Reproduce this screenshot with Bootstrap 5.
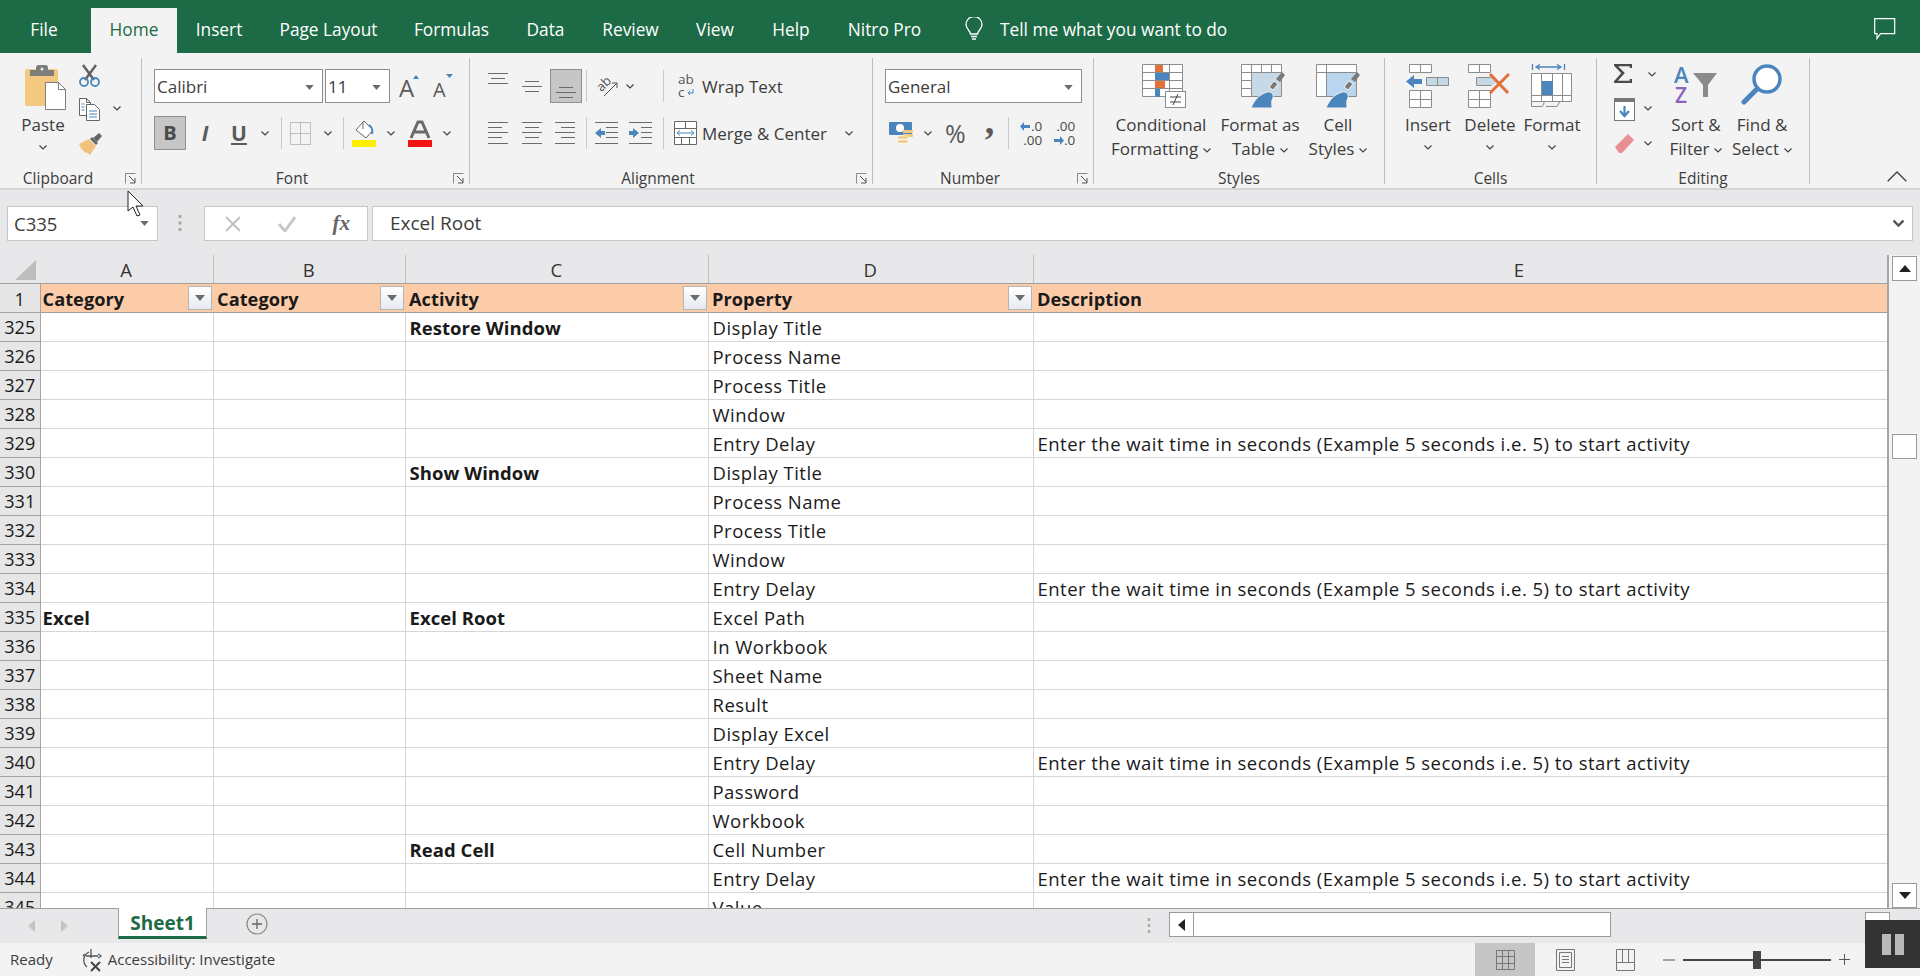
<!DOCTYPE html>
<html lang="en">
<head>
<meta charset="utf-8">
<title>Excel</title>
<link href="https://cdn.jsdelivr.net/npm/bootstrap@5.3.0/dist/css/bootstrap.min.css" rel="stylesheet">
<style>
html,body{height:976px;overflow:hidden}
body{font-family:"Open Sans","Liberation Sans",sans-serif;font-size:17px;color:#3c3c3c;background:#f3f3f3;letter-spacing:0}
svg{display:block;flex:none}
.topbar{height:53px;background:#1d6b46;color:#fff;padding-left:12px}
.topbar .nav-link{color:#fff;height:45px;margin-top:8px;padding:0;line-height:44px;text-align:center;font-size:17.300px;border-radius:0;white-space:nowrap}
.topbar .nav-link.active{background:#f3f3f3;color:#1d6b46}
.t1{width:64px}.t2{width:86px}.t3{width:84px}.t4{width:135px}.t5{width:111px}.t6{width:77px}.t7{width:93px}.t8{width:76px}.t9{width:76px}.t10{width:111px}
.t1{margin-right:15px}
.tell{margin-left:24px;font-size:17.300px;padding-top:6px}
.tell svg{margin-top:-2px}
.ribbon{height:137px;padding-top:5px;background:#f3f3f3;border-bottom:2px solid #d5d5d5}
.rg{height:126px;border-right:1px solid #bcbcbc;flex:none}
.rg-body{height:100px}
.rg-foot{height:26px;line-height:40px;text-align:center;position:relative;font-size:15.500px}
.launch{position:absolute;right:5px;top:15px}
.g1{width:142px}.g2{width:328px}.g3{width:403px}.g4{width:221px}.g5{width:291px}.g6{width:212px}.g7{width:213px}
.pt6{padding-top:6px}.pt11{padding-top:11px}
.pr25{padding-right:25px}.pr26{padding-right:26px}.pr27{padding-right:27px}
.rows{gap:13px}.rowx{height:34px}
.ml1{margin-left:1px}.ml2{margin-left:2px}.ml4{margin-left:4px}.ml5{margin-left:5px}.ml6{margin-left:6px}.ml8{margin-left:8px}.ml9{margin-left:9px}.ml10{margin-left:10px}.ml11{margin-left:11px}.ml12{margin-left:12px}.ml13{margin-left:13px}.ml14{margin-left:14px}.ml16{margin-left:16px}.ml17{margin-left:17px}.ml18{margin-left:18px}.ml19{margin-left:19px}.ml20{margin-left:20px}.ml29{margin-left:29px}
.combo{height:34px;background:#fff;border:1px solid #8f8f8f;padding:2px 8px 0 2px;font-size:17px}
.w169{width:169px}.w65{width:65px}.w197{width:197px}
.toggled{background:#c6c6c6;border:1px solid #8f8f8f;height:34px;width:32px;display:flex;align-items:center;justify-content:center;flex:none}
.b-btn{font-weight:700;font-size:20px;color:#4a4a4a}
.vsep{width:1px;height:32px;background:#c9c9c9;flex:none}
.glyph{font-size:21px;line-height:24px;color:#5a5a5a;width:14px;text-align:center;flex:none}
.big{display:flex;flex-direction:column;align-items:center;flex:none}
.big>*{flex:none}
.big .ic{height:49px}
.lbl{line-height:24px;text-align:center;white-space:nowrap}
.lbl svg{display:inline-block;vertical-align:middle;margin-left:5px}
.chevline{height:20px;display:flex;align-items:center;justify-content:center}
.w54{width:54px}.w98{width:98px}.w100{width:100px}.w56{width:56px}.w62{width:62px}.w66{width:66px}.w60{width:60px}.w49{width:49px}
.small-stack{display:flex;flex-direction:column;flex:none}
.s1{height:35px}.s2{height:36px}.s3{height:26px}
.pl16{padding-left:16px}.pl18{padding-left:18px}.pl12{padding-left:12px}.pl17{padding-left:17px}
.ribbon-end{flex:1 1 auto;padding:0 13px 6px 0}
.band{height:65px;background:#e8e8ea;padding:16px 7px 0}
.fbox{height:35px;background:#fff;border:1px solid #c6c6c6;font-size:19px;padding-top:1px}
.name{width:151px;padding:0 8px 0 6px;font-size:18.500px}
.fxb{width:164px;margin-left:46px;padding:0 17px 0 20px}
.fin{margin-left:4px;width:1541px;padding:0 8px 0 17px}
.sheetwrap{height:653px;background:#fff}
.gridclip{width:1889px;height:653px;overflow:hidden;border-right:2px solid #a5a5a5;flex:none}
.sheet.table{table-layout:fixed;width:1887px;margin:0;border-collapse:collapse;font-size:18.500px;letter-spacing:.47px;color:#222}
.sheet.table>:not(caption)>*>*{padding:1px 3px 0 4px;height:29px;line-height:27px;border:1px solid #d6d6d6;background:#fff;color:#1a1a1a;white-space:nowrap;box-shadow:none;overflow:visible}
.sheet.table .fw-bold,.sheet.table .hdr th{letter-spacing:.05px}
.sheet.table>tbody>tr>td:nth-child(2),.sheet.table>thead>tr.hdr>th:nth-child(2){padding-left:2px}
.c0{width:40px}.c1{width:173px}.c2{width:192px}.c3{width:303px}.c4{width:325px}.c5{width:854px}
.sheet.table>thead>tr.cols>*{height:28px;background:#e8e8ea;text-align:center;font-weight:400;border:0;border-right:1px solid #c0c0c0;border-bottom:1px solid #9f9f9f;line-height:27px;padding:1px 0 0;color:#333}
.sheet.table>thead>tr.cols>th.ecol{padding-left:118px}
.sheet.table>thead>tr.hdr>*{background:#fccca8;font-weight:700;position:relative;border:0;border-bottom:1px solid #9f9f9f;line-height:26px;font-size:18.200px}
.sheet.table>thead>tr>th.rh,.sheet.table>tbody>tr>th.rh{background:#e6e6e6;font-weight:400;text-align:center;padding:1px 0 0;border:0;border-right:1px solid #a5a5a5;border-bottom:1px solid #a5a5a5;letter-spacing:0;font-size:18px}
.sheet.table>thead>tr.cols>th.corner{background:#e8e8ea;padding:5px 0 0 15px;border-right:0;vertical-align:top}
.fbtn{position:absolute;right:1px;top:2px;width:24px;height:24px;background:linear-gradient(#fff,#e6eaf0);border:1px solid #b5b5b5;display:flex;align-items:center;justify-content:center}
.vscroll{width:31px;background:#f3f3f3;padding:1px 3px 0 3px}
.sbtn{width:25px;height:25px;background:#fff;border:1px solid #9a9a9a;display:flex;align-items:center;justify-content:center;flex:none}
.thumb{margin-top:153px}
.tabbar{height:35px;background:#e8e8ea;border-top:1px solid #9f9f9f;position:relative}
.navs{width:118px;padding-left:28px;gap:26px}
.sheet-tab{width:89px;height:31px;margin-top:-1px;background:#fff;border-left:1px solid #9f9f9f;border-right:1px solid #9f9f9f;border-bottom:3px solid #1d6b46;text-align:center;font-weight:700;color:#1d6b46;font-size:19px;line-height:30px}
.addc{margin-left:39px}
.hscroll{margin-left:901px;margin-top:3px}
.hdots{left:1147px}
.fdots{left:178px;top:214px}
.htrack{width:417px;height:25px;background:#fff;border:1px solid #9a9a9a;border-left:0}
.sbtn.r{margin-left:254px}
.status{height:33px;background:#f3f3f3;padding-left:10px;font-size:15px;position:relative}
.acc{margin-left:27px}
.views{margin-left:auto;height:33px}
.view{width:60px;height:33px;display:flex;align-items:center;justify-content:center}
.view.on{background:#c6c6c6}
.zoomc{width:187px;margin-right:70px;margin-left:8px}
.slider{width:148px;height:2px;background:#444;margin:0 8px;position:relative}
.sthumb{position:absolute;left:70px;top:-8px;width:8px;height:18px;background:#444}
.pause{position:absolute;right:0;top:920px;width:55px;height:48px;background:#333;display:flex;align-items:center;justify-content:center;gap:4px}
.pause i{display:block;width:9px;height:21px;background:#b9b9b9}
.cursor{position:absolute;left:127px;top:190px}
.ic-txt{font-size:25px;color:#5a5a5a;line-height:24px}
.comma{font-family:"Liberation Serif",serif;font-weight:700;font-size:38px;color:#5a5a5a;line-height:24px;margin-top:-24px}
.fx{font-family:"Liberation Serif",serif;font-style:italic;font-weight:600;font-size:21px;color:#666}
.dec{font-size:13.500px;line-height:14px;color:#4a4a4a;width:23px}
.dec span{display:flex;justify-content:flex-end;align-items:center}
.textbtn{white-space:nowrap;font-size:17px;padding-top:2px}
</style>
</head>
<body class="position-relative">
<svg width="0" height="0" class="position-absolute">
<symbol id="ch" viewBox="0 0 8 5"><path d="M.5.5 4 4 7.500.5" fill="none" stroke="#444" stroke-width="1.200"/></symbol>
<symbol id="tri" viewBox="0 0 10 6"><path d="M0 0h10L5 6z" fill="#6b6b6b"/></symbol>
<symbol id="lau" viewBox="0 0 11 11"><path d="M.5 10.500V.5H10.500" fill="none" stroke="#8a8a8a"/><path d="M4 3l6 6M5 10h5V5" fill="none" stroke="#555"/></symbol>
</svg>

<div class="topbar d-flex">
  <ul class="nav flex-nowrap">
    <li class="nav-item"><a class="nav-link t1">File</a></li>
    <li class="nav-item"><a class="nav-link active t2">Home</a></li>
    <li class="nav-item"><a class="nav-link t3">Insert</a></li>
    <li class="nav-item"><a class="nav-link t4">Page Layout</a></li>
    <li class="nav-item"><a class="nav-link t5">Formulas</a></li>
    <li class="nav-item"><a class="nav-link t6">Data</a></li>
    <li class="nav-item"><a class="nav-link t7">Review</a></li>
    <li class="nav-item"><a class="nav-link t8">View</a></li>
    <li class="nav-item"><a class="nav-link t9">Help</a></li>
    <li class="nav-item"><a class="nav-link t10">Nitro Pro</a></li>
  </ul>
  <div class="tell d-flex align-items-center gap-3">
    <svg width="20" height="24" viewBox="0 0 20 24"><path d="M6.500 17c0-3-4.500-5-4.500-9.500a8 8 0 0 1 16 0C18 12 13.500 14 13.500 17zM7 19.500h6M8 22h4" fill="none" stroke="#fff" stroke-width="1.300"/></svg>
    <span>Tell me what you want to do</span>
  </div>
  <div class="ms-auto d-flex align-items-center pe-4 pt-1">
    <svg width="22" height="22" viewBox="0 0 22 22"><path d="M.7.7h20v15H6.500L3 20.500v-4.800H.7z" fill="none" stroke="#fff" stroke-width="1.200"/></svg>
  </div>
</div>

<div class="ribbon d-flex">
  <!-- Clipboard -->
  <div class="rg g1">
    <div class="rg-body d-flex pt6 pl16">
      <div class="big w54">
        <div class="ic ml6">
          <svg width="42" height="46" viewBox="0 0 42 46"><rect x="0" y="5" width="33" height="37" rx="2" fill="#f3c97f"/><path d="M11 6V3.500A2.500 2.500 0 0 1 13.500 1h7A2.500 2.500 0 0 1 23 3.500V6h6v6H5V6z" fill="#7d7d7d"/><circle cx="17" cy="5" r="1.500" fill="#eee"/><path d="M20.500 18.500h13l7 7v20h-20z" fill="#fff" stroke="#7d7d7d"/><path d="M33.500 18.500v7h7" fill="none" stroke="#7d7d7d"/></svg>
        </div>
        <div class="lbl">Paste</div>
        <div class="chevline"><svg width="8" height="5"><use href="#ch"/></svg></div>
      </div>
      <div class="small-stack w60 ml9">
        <div class="s1"><svg width="21" height="23" viewBox="0 0 21 23"><path d="M4 1l11 15M17 1L6 16" stroke="#5f5f5f" stroke-width="2.400" fill="none"/><circle cx="5" cy="18" r="4" fill="none" stroke="#4a86bd" stroke-width="1.800"/><circle cx="16" cy="18" r="4" fill="none" stroke="#4a86bd" stroke-width="1.800"/></svg></div>
        <div class="s2 d-flex"><svg width="21" height="23" viewBox="0 0 21 23"><path d="M.5.500h7l4 4v13H.5zM7.500.5v4h4" fill="#fff" stroke="#666"/><path d="M7.500 6.500h8l5 5v11h-13z" fill="#fff" stroke="#666"/><path d="M10 13h8M10 16h8M10 19h8" stroke="#4a86bd"/><path d="M2.500 6h3M2.500 9h3M2.500 12h3" stroke="#4a86bd"/></svg><svg width="8" height="5" class="ml13 mt-2 pt-0"><use href="#ch"/></svg></div>
        <div class="s3"><svg width="24" height="22" viewBox="0 0 24 22"><path d="M14 5l6-5 3 3-5 6z" fill="#666"/><path d="M13 4l6 6-2 2-6-6z" fill="#666"/><path d="M0 11l10-5 7 7-6 9-4-3-1 1-2-3-1 0z" fill="#f1c27d"/></svg></div>
      </div>
    </div>
    <div class="rg-foot"><span class="pr25">Clipboard</span><svg class="launch" width="11" height="11"><use href="#lau"/></svg></div>
  </div>
  <!-- Font -->
  <div class="rg g2">
    <div class="rg-body pt11 d-flex flex-column rows">
      <div class="d-flex rowx align-items-center">
        <div class="combo w169 ml12 d-flex align-items-center justify-content-between"><span>Calibri</span><svg width="9" height="5"><use href="#tri"/></svg></div>
        <div class="combo w65 ml2 d-flex align-items-center justify-content-between"><span>11</span><svg width="9" height="5"><use href="#tri"/></svg></div>
        <svg class="ml9" width="20" height="26" viewBox="0 0 20 26"><text x="0" y="24" font-family="Open Sans" font-size="24" fill="#5a5a5a">A</text><path d="M14 6l3-4 3 4z" fill="#4a86bd"/></svg>
        <svg class="ml14" width="20" height="26" viewBox="0 0 20 26"><text x="0" y="24" font-family="Open Sans" font-size="20" fill="#5a5a5a">A</text><path d="M13 1h7l-3.500 4z" fill="#4a86bd"/></svg>
      </div>
      <div class="d-flex rowx align-items-center">
        <div class="toggled ml12 b-btn">B</div>
        <div class="glyph ml12 fst-italic fw-bold">I</div>
        <div class="glyph ml19 fw-bold text-decoration-underline">U</div>
        <svg class="ml16" width="8" height="5"><use href="#ch"/></svg>
        <div class="vsep ml12"></div>
        <svg class="ml8" width="21" height="23" viewBox="0 0 21 23"><path d="M.5.500h20v22H.5zM10.500 .5v22M.5 11.500h20" fill="none" stroke="#8a8a8a" stroke-dasharray="1 1"/></svg>
        <svg class="ml13" width="8" height="5"><use href="#ch"/></svg>
        <div class="vsep ml11"></div>
        <svg class="ml8" width="24" height="27" viewBox="0 0 24 27"><path d="M12 1l9 9-7 8-10-8z" fill="#fff" stroke="#666"/><path d="M11 2v7" stroke="#666"/><path d="M17 5c3 2 4 5 3 9" fill="none" stroke="#4a86bd" stroke-width="2"/><rect y="20" width="24" height="7" fill="#ffef00"/></svg>
        <svg class="ml11" width="8" height="5"><use href="#ch"/></svg>
        <svg class="ml13" width="24" height="27" viewBox="0 0 24 27"><path d="M3 18L10 2h4l7 16M6.500 12h11" fill="none" stroke="#6a6a6a" stroke-width="3"/><rect y="20" width="24" height="7" fill="#f21313"/></svg>
        <svg class="ml11" width="8" height="5"><use href="#ch"/></svg>
      </div>
    </div>
    <div class="rg-foot"><span class="pr27">Font</span><svg class="launch" width="11" height="11"><use href="#lau"/></svg></div>
  </div>
  <!-- Alignment -->
  <div class="rg g3">
    <div class="rg-body pt11 d-flex flex-column rows">
      <div class="d-flex rowx align-items-center">
        <svg class="ml18 mb-3" width="20" height="11" viewBox="0 0 20 11"><path d="M0 .5h20M3 5.500h14M0 10.500h20" stroke="#6a6a6a" fill="none"/></svg>
        <svg class="ml14" width="20" height="11" viewBox="0 0 20 11"><path d="M3 .5h14M0 5.500h20M3 10.500h14" stroke="#6a6a6a" fill="none"/></svg>
        <div class="toggled ml8 align-items-end pb-1"><svg width="20" height="11" viewBox="0 0 20 11"><path d="M3 .5h14M0 5.500h20M3 10.500h14" stroke="#6a6a6a" fill="none"/></svg></div>
        <div class="vsep ml4"></div>
        <svg class="ml10" width="21" height="21" viewBox="0 0 21 21"><text x="1" y="12" transform="rotate(-45 8 10)" font-family="Open Sans" font-size="13" fill="#555">ab</text><path d="M7 20L20 7M15 7h5v5" fill="none" stroke="#555"/></svg>
        <svg class="ml8" width="8" height="5"><use href="#ch"/></svg>
        <div class="vsep ml29"></div>
        <svg class="ml14" width="16" height="26" viewBox="0 0 16 26"><text x="0" y="11" font-family="Open Sans" font-size="13.500" fill="#555">ab</text><text x="0" y="24" font-family="Open Sans" font-size="13.500" fill="#555">c</text><path d="M15 16v4H10M12 18l-2 2 2 2" fill="none" stroke="#4a86bd"/></svg>
        <span class="ml8 textbtn">Wrap Text</span>
      </div>
      <div class="d-flex rowx align-items-center">
        <svg class="ml18" width="20" height="24" viewBox="0 0 20 24"><path d="M0 1.500h20M0 6.500h14M0 11.500h20M0 16.500h14M0 22.500h20" stroke="#6a6a6a" fill="none"/></svg>
        <svg class="ml14" width="20" height="24" viewBox="0 0 20 24"><path d="M0 1.500h20M3 6.500h14M0 11.500h20M3 16.500h14M0 22.500h20" stroke="#6a6a6a" fill="none"/></svg>
        <svg class="ml13" width="20" height="24" viewBox="0 0 20 24"><path d="M0 1.500h20M6 6.500h14M0 11.500h20M6 16.500h14M0 22.500h20" stroke="#6a6a6a" fill="none"/></svg>
        <div class="vsep ml11"></div>
        <svg class="ml8" width="23" height="24" viewBox="0 0 23 24"><path d="M0 1.500h23M11 6.500h12M11 11.500h12M11 16.500h12M0 22.500h23" stroke="#6a6a6a" fill="none"/><path d="M0 12l6-5v3h4v4H6v3z" fill="#4a86bd"/></svg>
        <svg class="ml11" width="23" height="24" viewBox="0 0 23 24"><path d="M0 1.500h23M12 6.500h11M12 11.500h11M12 16.500h11M0 22.500h23" stroke="#6a6a6a" fill="none"/><path d="M10 12L4 7v3H0v4h4v3z" fill="#4a86bd"/></svg>
        <div class="vsep ml11"></div>
        <svg class="ml10" width="23" height="24" viewBox="0 0 23 24"><path d="M.5.500h22v23H.5zM.5 7.500h22M.5 16.500h22M11.500.5v7M7.500 16.500v7M15.500 16.500v7" fill="#fff" stroke="#666"/><path d="M3 12h17M6 9.500L3 12l3 2.500M17 9.500l3 2.500-3 2.500" fill="none" stroke="#4a86bd"/></svg>
        <span class="ml5 textbtn">Merge &amp; Center</span>
        <svg class="ml18" width="8" height="5"><use href="#ch"/></svg>
      </div>
    </div>
    <div class="rg-foot"><span class="pr26">Alignment</span><svg class="launch" width="11" height="11"><use href="#lau"/></svg></div>
  </div>
  <!-- Number -->
  <div class="rg g4">
    <div class="rg-body pt11 d-flex flex-column rows">
      <div class="d-flex rowx"><div class="combo w197 ml12 d-flex align-items-center justify-content-between"><span>General</span><svg width="9" height="5"><use href="#tri"/></svg></div></div>
      <div class="d-flex rowx align-items-center">
        <svg class="ml16" width="24" height="24" viewBox="0 0 24 24"><rect y="1" width="23" height="13" rx="1" fill="#4a86bd"/><circle cx="11" cy="7" r="4" fill="#fff"/><rect x="14" y="9" width="10" height="3" fill="#f3c97f"/><rect x="14" y="13" width="10" height="3" fill="#f3c97f"/><rect x="9" y="15" width="10" height="3" fill="#f3c97f" stroke="#fff" stroke-width=".5"/><rect x="9" y="19" width="10" height="3" fill="#f3c97f" stroke="#fff" stroke-width=".5"/></svg>
        <svg class="ml11" width="8" height="5"><use href="#ch"/></svg>
        <span class="ic-txt ml13">%</span>
        <span class="comma ml19">,</span>
        <div class="vsep ml14"></div>
        <div class="dec ml10"><span><svg width="11" height="9" viewBox="0 0 11 9"><path d="M0 4.500L4 0v3h6v3H4v3z" fill="#4a86bd"/></svg>.0</span><span>.00</span></div>
        <div class="dec ml10"><span>.00</span><span><svg width="11" height="9" viewBox="0 0 11 9"><path d="M11 4.500L7 0v3H1v3h6v3z" fill="#4a86bd"/></svg>.0</span></div>
      </div>
    </div>
    <div class="rg-foot"><span class="pr26">Number</span><svg class="launch" width="11" height="11"><use href="#lau"/></svg></div>
  </div>
  <!-- Styles -->
  <div class="rg g5">
    <div class="rg-body d-flex pt6 pl18">
      <div class="big w98">
        <div class="ic ml6"><svg width="44" height="44" viewBox="0 0 44 44"><path d="M.5.500h40v32H.5zM.5 8.500h40M.5 16.500h40M.5 24.500h40M13.500.5v32M27.500.5v32" stroke="#8c8c8c" fill="#fff"/><rect x="13" y="1" width="8" height="7" fill="#e2703a"/><rect x="13" y="9" width="14" height="7" fill="#4a86bd"/><rect x="13" y="17" width="10" height="7" fill="#e2703a"/><rect x="13" y="25" width="5" height="8" fill="#4a86bd"/><rect x="23.500" y="27.500" width="20" height="16" fill="#fff" stroke="#8c8c8c"/><path d="M28 33h11M28 38h11M36 30l-5 11" stroke="#444" fill="none"/></svg></div>
        <div class="lbl">Conditional</div>
        <div class="lbl">Formatting<svg width="8" height="5"><use href="#ch"/></svg></div>
      </div>
      <div class="big w100">
        <div class="ic ml6"><svg width="44" height="44" viewBox="0 0 44 44"><path d="M.5.500h40v32H.5zM.5 8.500h40M.5 16.500h40M.5 24.500h40M10.500.5v32M20.500.5v32M30.500.5v32" stroke="#8c8c8c" fill="#fff"/><rect x="11" y="9" width="29" height="23" fill="#c7d9e6"/><path d="M44 11l-3-3-6 7 4 3z" fill="#7a7a7a"/><path d="M37 20l-4-3-5 6 4 3z" fill="#7a7a7a" stroke="#f3f3f3"/><path d="M10 44c3-7 7-13 16-16 5-1 7 3 6 6-2 3-1 6-1 10z" fill="#4a86bd" stroke="#f3f3f3"/></svg></div>
        <div class="lbl">Format as</div>
        <div class="lbl">Table<svg width="8" height="5"><use href="#ch"/></svg></div>
      </div>
      <div class="big w56">
        <div class="ic"><svg width="44" height="44" viewBox="0 0 44 44"><path d="M.5.500h40v32H.5zM.5 8.500h40M10.500.5v32" stroke="#8c8c8c" fill="#fff"/><rect x="11" y="9" width="29" height="23" fill="#b9d6ee"/><path d="M44 11l-3-3-6 7 4 3z" fill="#7a7a7a"/><path d="M37 20l-4-3-5 6 4 3z" fill="#7a7a7a" stroke="#f3f3f3"/><path d="M10 44c3-7 7-13 16-16 5-1 7 3 6 6-2 3-1 6-1 10z" fill="#4a86bd" stroke="#f3f3f3"/></svg></div>
        <div class="lbl">Cell</div>
        <div class="lbl">Styles<svg width="8" height="5"><use href="#ch"/></svg></div>
      </div>
    </div>
    <div class="rg-foot"><span>Styles</span></div>
  </div>
  <!-- Cells -->
  <div class="rg g6">
    <div class="rg-body d-flex pt6 pl12">
      <div class="big w62">
        <div class="ic"><svg width="44" height="44" viewBox="0 0 44 44"><path d="M3.500.5h22v8h-22zM14.500.5v8M3.500 26.500h22v17h-22zM3.500 35.500h22M14.500 26.500v17" fill="#fff" stroke="#8c8c8c"/><path d="M20.500 13.500h22v8h-22zM31.500 13.500v8" fill="#c5d8e6" stroke="#8c8c8c"/><path d="M0 17.500L8 11v4h8v5H8v4z" fill="#4a86bd"/></svg></div>
        <div class="lbl">Insert</div>
        <div class="chevline"><svg width="8" height="5"><use href="#ch"/></svg></div>
      </div>
      <div class="big w62">
        <div class="ic"><svg width="44" height="44" viewBox="0 0 44 44"><path d="M.5.500h22v8H.5zM11.500.5v8M.5 26.500h22v17H.5zM.5 35.500h22M11.500 26.500v17" fill="#fff" stroke="#8c8c8c"/><path d="M8.500 13.500h15v8h-15z" fill="#c5d8e6" stroke="#8c8c8c"/><path d="M23 12l6 5.500-6 5.500z" fill="#c5d8e6"/><path d="M22 10l18 19M41 10L22 29" stroke="#e2703a" stroke-width="3" fill="none"/></svg></div>
        <div class="lbl">Delete</div>
        <div class="chevline"><svg width="8" height="5"><use href="#ch"/></svg></div>
      </div>
      <div class="big w62">
        <div class="ic"><svg width="42" height="44" viewBox="0 0 42 44"><path d="M1.500 0v6M33.500 0v6M6 3h23M9 .5L5 3l4 2.500M26 .5L30 3l-4 2.500" fill="none" stroke="#4a86bd" stroke-width="1.300"/><path d="M.5 9.500h40v28H.5zM.5 31.500h40M10.500 9.500v28M21.500 9.500v28M31.500 9.500v28" fill="#fff" stroke="#8c8c8c"/><rect x="11" y="17" width="11" height="14" fill="#4a86bd"/><path d="M.5 37.500v5h11l2-5M15 42.500h11l3-5" fill="none" stroke="#8c8c8c"/></svg></div>
        <div class="lbl">Format</div>
        <div class="chevline"><svg width="8" height="5"><use href="#ch"/></svg></div>
      </div>
    </div>
    <div class="rg-foot"><span>Cells</span></div>
  </div>
  <!-- Editing -->
  <div class="rg g7">
    <div class="rg-body d-flex pt6 pl17">
      <div class="small-stack w49">
        <div class="s1 d-flex"><svg width="18" height="19" viewBox="0 0 18 19"><path d="M17 4V1H1l8 8-8 9h16v-3" fill="none" stroke="#4a4a4a" stroke-width="2.600"/></svg><svg class="ml16 mt-2" width="8" height="5"><use href="#ch"/></svg></div>
        <div class="s2 d-flex"><svg width="21" height="23" viewBox="0 0 21 23"><rect x=".5" y=".5" width="20" height="22" fill="#fff" stroke="#777"/><rect width="21" height="4" fill="#777"/><path d="M10.500 8v10M6 13l4.500 5 4.500-5" fill="none" stroke="#4a86bd" stroke-width="2.200"/></svg><svg class="ml9 mt-2" width="8" height="5"><use href="#ch"/></svg></div>
        <div class="s3 d-flex"><svg width="21" height="21" viewBox="0 0 21 21"><path d="M1 14L14 1l6 6L8 20H5z" fill="#e98f93"/></svg><svg class="ml9 mt-2" width="8" height="5"><use href="#ch"/></svg></div>
      </div>
      <div class="big w66">
        <div class="ic"><svg width="44" height="42" viewBox="0 0 44 42"><text x="0" y="19" font-family="Open Sans" font-size="22" font-weight="600" fill="#4a86bd">A</text><text x="1" y="39" font-family="Open Sans" font-size="21" font-weight="600" fill="#8a63b8">Z</text><path d="M19 9h24l-9 12v12h-5V21z" fill="#8a8a8a"/></svg></div>
        <div class="lbl">Sort &amp;</div>
        <div class="lbl">Filter<svg width="8" height="5"><use href="#ch"/></svg></div>
      </div>
      <div class="big w66">
        <div class="ic"><svg width="42" height="42" viewBox="0 0 42 42"><circle cx="26" cy="15" r="13" fill="#fff" stroke="#4a86bd" stroke-width="3.500"/><path d="M16 25L3 38" stroke="#4a86bd" stroke-width="5" stroke-linecap="round"/></svg></div>
        <div class="lbl">Find &amp;</div>
        <div class="lbl">Select<svg width="8" height="5"><use href="#ch"/></svg></div>
      </div>
    </div>
    <div class="rg-foot"><span>Editing</span></div>
  </div>
  <div class="ribbon-end d-flex align-items-end justify-content-end">
    <svg width="20" height="11" viewBox="0 0 20 11"><path d="M.7 10.300L10 1l9.300 9.300" fill="none" stroke="#444" stroke-width="1.400"/></svg>
  </div>
</div>

<div class="band d-flex">
  <div class="fbox name d-flex align-items-center justify-content-between"><span>C335</span><svg width="9" height="5"><use href="#tri"/></svg></div>
  <svg class="fdots position-absolute" width="4" height="18" viewBox="0 0 4 18"><path d="M2 1v3M2 7.500v3M2 14v3" stroke="#aaa" stroke-width="3"/></svg>
  <div class="fbox fxb d-flex align-items-center justify-content-between">
    <svg width="16" height="16" viewBox="0 0 16 16"><path d="M1 1l14 14M15 1L1 15" stroke="#c0c0c0" stroke-width="1.800"/></svg>
    <svg width="18" height="16" viewBox="0 0 18 16"><path d="M1 8l6 7L17 1" fill="none" stroke="#c8c8c8" stroke-width="3"/></svg>
    <span class="fx">fx</span>
  </div>
  <div class="fbox fin d-flex align-items-center justify-content-between"><span>Excel Root</span><svg width="11" height="8" viewBox="0 0 11 8"><path d="M.5.500l5 5 5-5" fill="none" stroke="#555" stroke-width="2.400"/></svg></div>
</div>

<div class="sheetwrap d-flex">
  <div class="gridclip">
    <table class="table sheet">
      <colgroup><col class="c0"><col class="c1"><col class="c2"><col class="c3"><col class="c4"><col class="c5"></colgroup>
      <thead>
        <tr class="cols"><th class="corner"><svg width="21" height="20" viewBox="0 0 21 20"><path d="M21 0v20H0z" fill="#bdbdbd"/></svg></th><th>A</th><th>B</th><th>C</th><th>D</th><th class="ecol">E</th></tr>
        <tr class="hdr"><th class="rh">1</th>
          <th>Category<span class="fbtn"><svg width="10" height="6"><use href="#tri"/></svg></span></th>
          <th>Category<span class="fbtn"><svg width="10" height="6"><use href="#tri"/></svg></span></th>
          <th>Activity<span class="fbtn"><svg width="10" height="6"><use href="#tri"/></svg></span></th>
          <th>Property<span class="fbtn"><svg width="10" height="6"><use href="#tri"/></svg></span></th>
          <th>Description</th></tr>
      </thead>
      <tbody>
        <tr><th class="rh">325</th><td></td><td></td><td class="fw-bold">Restore Window</td><td>Display Title</td><td></td></tr>
        <tr><th class="rh">326</th><td></td><td></td><td></td><td>Process Name</td><td></td></tr>
        <tr><th class="rh">327</th><td></td><td></td><td></td><td>Process Title</td><td></td></tr>
        <tr><th class="rh">328</th><td></td><td></td><td></td><td>Window</td><td></td></tr>
        <tr><th class="rh">329</th><td></td><td></td><td></td><td>Entry Delay</td><td>Enter the wait time in seconds (Example 5 seconds i.e. 5) to start activity</td></tr>
        <tr><th class="rh">330</th><td></td><td></td><td class="fw-bold">Show Window</td><td>Display Title</td><td></td></tr>
        <tr><th class="rh">331</th><td></td><td></td><td></td><td>Process Name</td><td></td></tr>
        <tr><th class="rh">332</th><td></td><td></td><td></td><td>Process Title</td><td></td></tr>
        <tr><th class="rh">333</th><td></td><td></td><td></td><td>Window</td><td></td></tr>
        <tr><th class="rh">334</th><td></td><td></td><td></td><td>Entry Delay</td><td>Enter the wait time in seconds (Example 5 seconds i.e. 5) to start activity</td></tr>
        <tr><th class="rh">335</th><td class="fw-bold">Excel</td><td></td><td class="fw-bold">Excel Root</td><td>Excel Path</td><td></td></tr>
        <tr><th class="rh">336</th><td></td><td></td><td></td><td>In Workbook</td><td></td></tr>
        <tr><th class="rh">337</th><td></td><td></td><td></td><td>Sheet Name</td><td></td></tr>
        <tr><th class="rh">338</th><td></td><td></td><td></td><td>Result</td><td></td></tr>
        <tr><th class="rh">339</th><td></td><td></td><td></td><td>Display Excel</td><td></td></tr>
        <tr><th class="rh">340</th><td></td><td></td><td></td><td>Entry Delay</td><td>Enter the wait time in seconds (Example 5 seconds i.e. 5) to start activity</td></tr>
        <tr><th class="rh">341</th><td></td><td></td><td></td><td>Password</td><td></td></tr>
        <tr><th class="rh">342</th><td></td><td></td><td></td><td>Workbook</td><td></td></tr>
        <tr><th class="rh">343</th><td></td><td></td><td class="fw-bold">Read Cell</td><td>Cell Number</td><td></td></tr>
        <tr><th class="rh">344</th><td></td><td></td><td></td><td>Entry Delay</td><td>Enter the wait time in seconds (Example 5 seconds i.e. 5) to start activity</td></tr>
        <tr><th class="rh">345</th><td></td><td></td><td></td><td>Value</td><td></td></tr>
      </tbody>
    </table>
  </div>
  <div class="vscroll d-flex flex-column">
    <div class="sbtn"><svg width="12" height="7" viewBox="0 0 12 7"><path d="M6 0l6 7H0z" fill="#222"/></svg></div>
    <div class="sbtn thumb"></div>
    <div class="sbtn mt-auto"><svg width="12" height="7" viewBox="0 0 12 7"><path d="M0 0h12L6 7z" fill="#222"/></svg></div>
  </div>
</div>

<div class="tabbar d-flex">
  <div class="navs d-flex align-items-center">
    <svg width="7" height="12" viewBox="0 0 7 12"><path d="M7 0v12L0 6z" fill="#c4c4c4"/></svg>
    <svg width="7" height="12" viewBox="0 0 7 12"><path d="M0 0v12l7-6z" fill="#c4c4c4"/></svg>
  </div>
  <div class="sheet-tab">Sheet1</div>
  <svg class="addc mt-1" width="22" height="22" viewBox="0 0 22 22"><circle cx="11" cy="11" r="10" fill="none" stroke="#888" stroke-width="1.200"/><path d="M6 11h10M11 6v10" stroke="#666" stroke-width="1.300"/></svg>
  <svg class="hdots mt-2 position-absolute" width="4" height="16" viewBox="0 0 4 16"><path d="M2 1v3M2 7v3M2 13v3" stroke="#aaa" stroke-width="2.500"/></svg>
  <div class="hscroll d-flex">
    <div class="sbtn"><svg width="7" height="12" viewBox="0 0 7 12"><path d="M7 0v12L0 6z" fill="#222"/></svg></div>
    <div class="htrack"></div>
    <div class="sbtn r"></div>
  </div>
</div>

<div class="status d-flex align-items-center">
  <span>Ready</span>
  <svg class="acc me-1" width="24" height="24" viewBox="0 0 24 24"><path d="M9 4a9 9 0 0 0-2 15" fill="none" stroke="#555" stroke-width="1.300"/><path d="M11 1v9M6 8h12M18 6l3 2-3 2M5 6L3 8" fill="none" stroke="#555" stroke-width="1.300"/><path d="M11 14l9 9M20 14l-9 9" stroke="#444" stroke-width="2"/></svg>
  <span>Accessibility: Investigate</span>
  <div class="views d-flex">
    <div class="view on"><svg width="19" height="20" viewBox="0 0 19 20"><path d="M.5.500h18v19H.5zM.5 6.500h18M.5 13.500h18M6.500.5v19M12.500.5v19" fill="none" stroke="#777"/></svg></div>
    <div class="view"><svg width="19" height="22" viewBox="0 0 19 22"><path d="M.5.500h18v21H.5z" fill="none" stroke="#777"/><path d="M3.500 3.500h12v15h-12zM6 7.500h7M6 10.500h7M6 13.500h7" fill="none" stroke="#777"/></svg></div>
    <div class="view"><svg width="19" height="22" viewBox="0 0 19 22"><path d="M.5.500h18v21H.5zM.5 13.500h18M6.500.5v13M12.500.5v13" fill="none" stroke="#777"/></svg></div>
  </div>
  <div class="zoomc d-flex align-items-center">
    <svg width="12" height="2"><path d="M0 1h12" stroke="#555"/></svg>
    <div class="slider"><div class="sthumb"></div></div>
    <svg width="11" height="11" viewBox="0 0 11 11"><path d="M0 5.500h11M5.500 0v11" stroke="#555"/></svg>
  </div>
</div>

<div class="pause"><i></i><i></i></div>
<svg class="cursor" width="19" height="28" viewBox="0 0 19 28"><path d="M1 1v20l5-4 4 9 3-1-4-9h7z" fill="#fff" stroke="#222"/></svg>

<script src="https://cdn.jsdelivr.net/npm/bootstrap@5.3.0/dist/js/bootstrap.bundle.min.js"></script>
</body>
</html>
